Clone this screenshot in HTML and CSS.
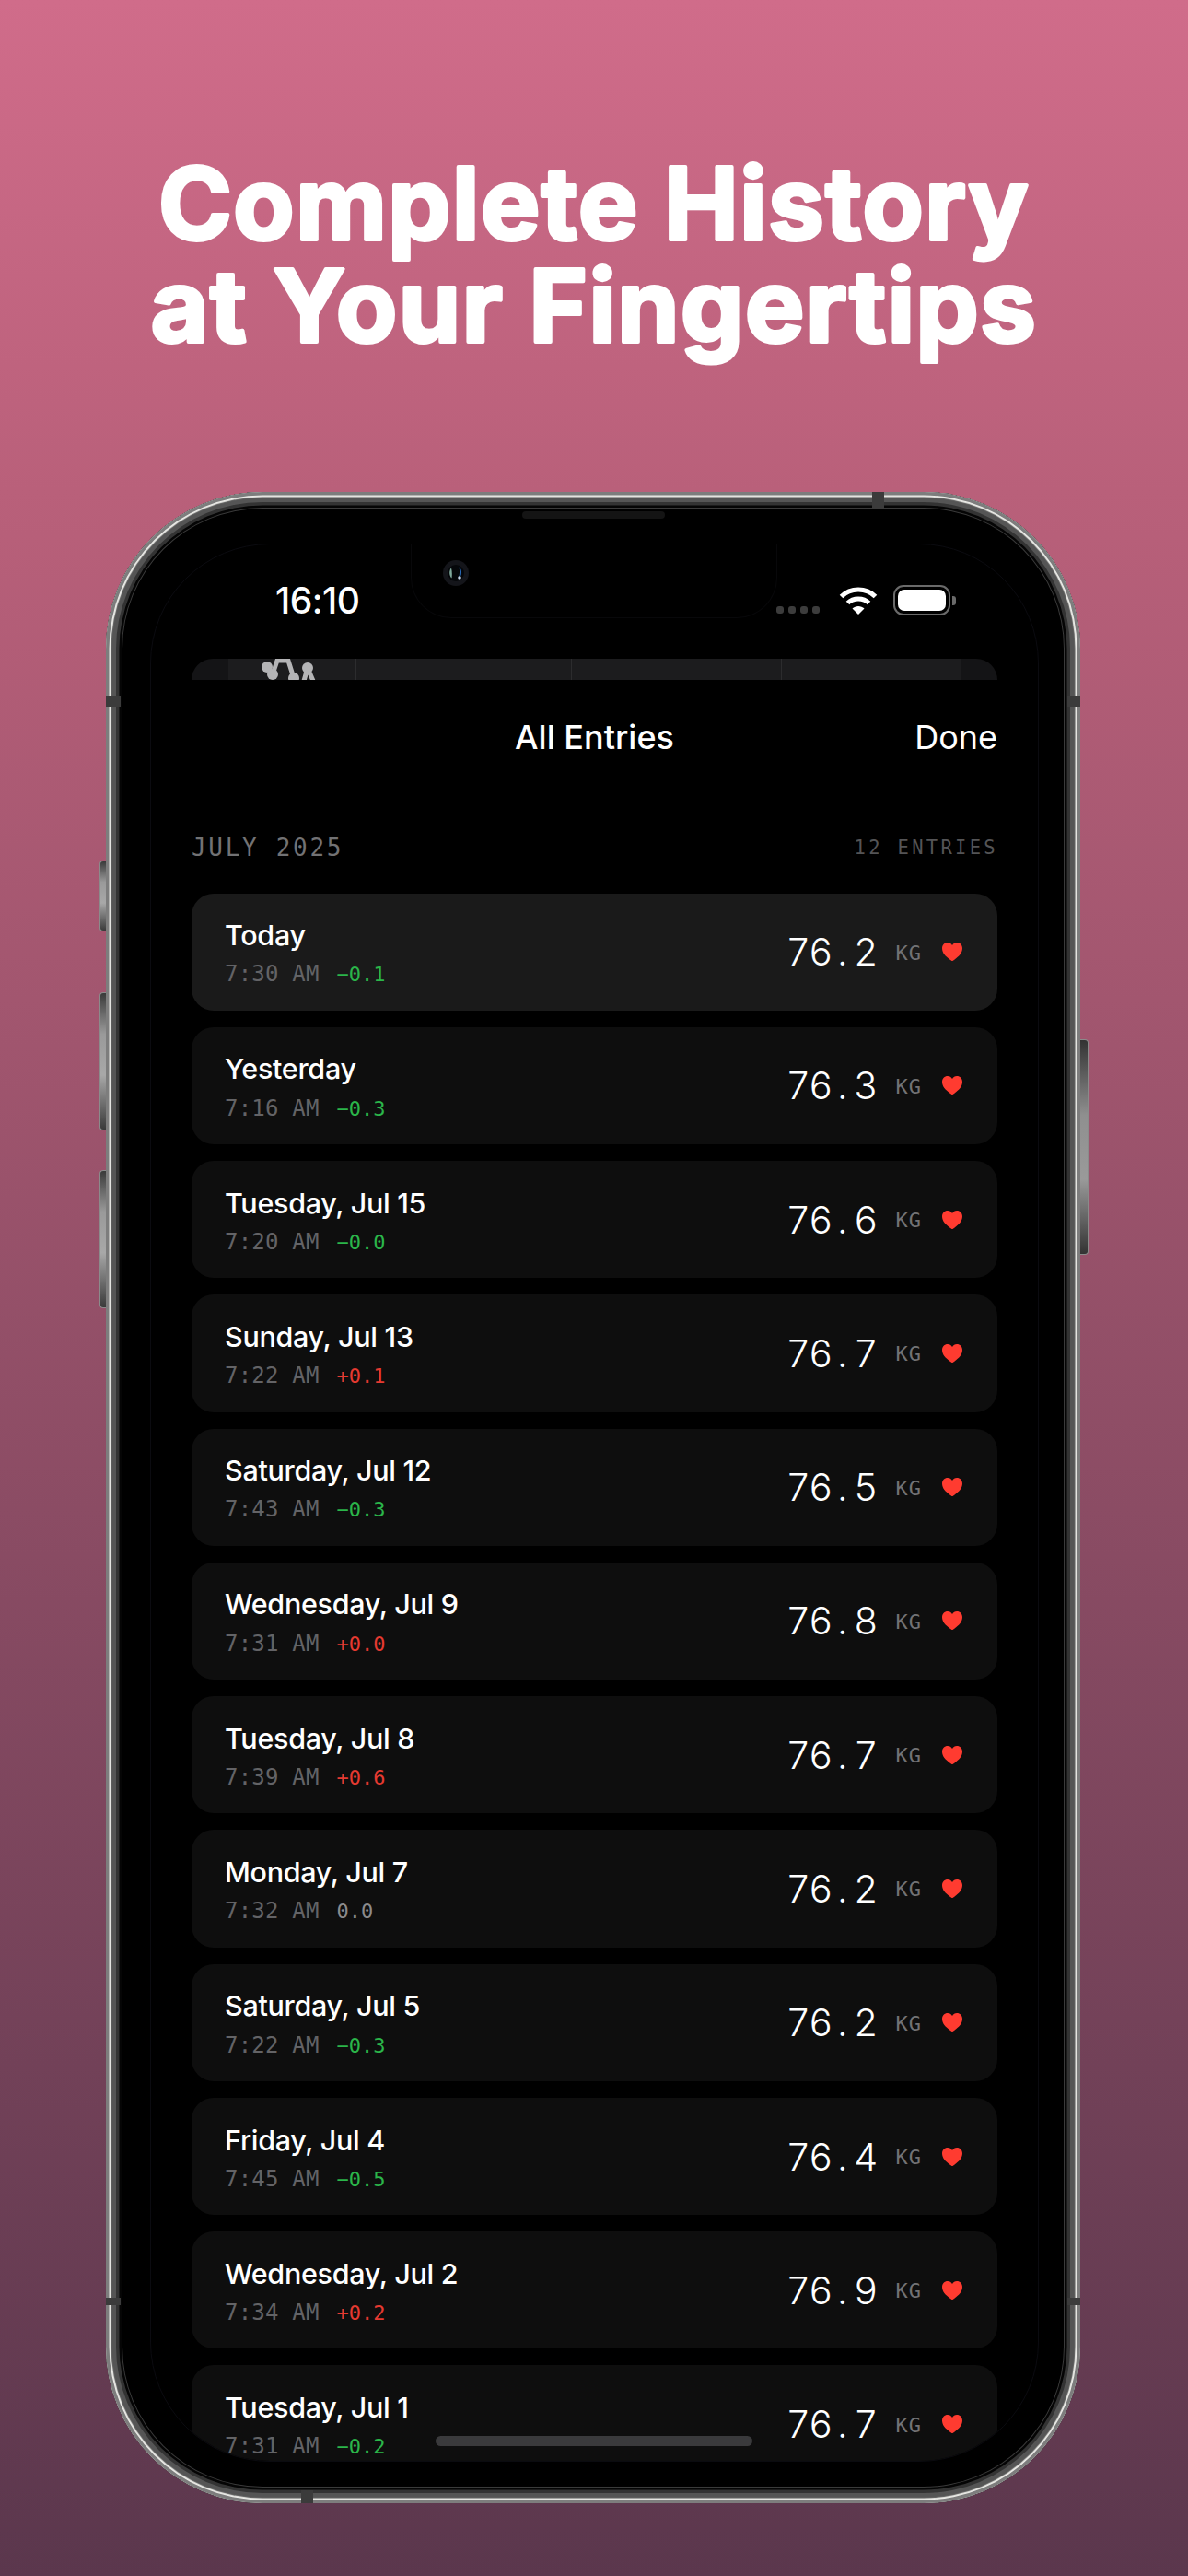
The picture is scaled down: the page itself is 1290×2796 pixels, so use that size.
FILE: index.html
```html
<!DOCTYPE html>
<html lang="en">
<head>
<meta charset="utf-8">
<title>Complete History at Your Fingertips</title>
<link rel="stylesheet" href="styles.css">
</head>
<body>
<svg class="defs" width="0" height="0" aria-hidden="true">
  <symbol id="heart" viewBox="0 0 22 20"><path d="M11 20C10.500 20 9.900 19.600 8.700 18.700C3.600 15 0 11.300 0 6.300C0 2.600 2.600 0 6 0C8.200 0 9.900 1.100 11 2.900C12.100 1.100 13.800 0 16 0C19.400 0 22 2.600 22 6.300C22 11.300 18.400 15 13.300 18.700C12.100 19.600 11.500 20 11 20Z"/></symbol>
</svg>
<main class="poster">
  <h1 class="headline">
    <svg class="headline-art" viewBox="0 0 1290 300">
      <text class="headline-line" x="645" y="120">Complete History</text>
      <text class="headline-line" x="645" y="231">at Your Fingertips</text>
    </svg>
  </h1>
  <div class="phone">
    <span class="btn btn-silent"></span>
    <span class="btn btn-up"></span>
    <span class="btn btn-down"></span>
    <span class="btn btn-power"></span>
    <span class="band band-top"></span>
    <span class="band band-bottom"></span>
    <span class="band band-left"></span>
    <span class="band band-right"></span>
    <span class="band band-left2"></span>
    <span class="band band-right2"></span>
    <span class="speaker"></span>
    <div class="screen">
      <span class="island"></span>
      <svg class="camera" viewBox="0 0 28 28" aria-hidden="true">
        <circle cx="14" cy="14" r="14" fill="#14151a"/>
        <circle cx="14" cy="14" r="9" fill="#05070a"/>
        <path d="M9 8.500C6.500 11 6.500 17 9.500 19.500C10 17 10 12 9 8.500Z" fill="#7fa99c"/>
        <path d="M17.500 7.500C21 10 21 17 17 20C18 16 18.500 11 17.500 7.500Z" fill="#2668b8"/>
        <circle cx="18" cy="19" r="1.800" fill="#c9d6ea"/>
      </svg>
      <div class="status">
        <span class="time">16:10</span>
        <div class="status-icons">
          <span class="signal"><i></i><i></i><i></i><i></i></span>
          <svg class="wifi" viewBox="0 0 42 30" aria-hidden="true">
            <path d="M2.500 10.500C12.500 0.500 29.500 0.500 39.500 10.500" fill="none" stroke="#fff" stroke-width="5"/>
            <path d="M9.500 17.500C15.500 11.500 26.500 11.500 32.500 17.500" fill="none" stroke="#fff" stroke-width="5"/>
            <path d="M21 30L14.500 23.500C18 20 24 20 27.500 23.500Z" fill="#fff"/>
          </svg>
          <span class="battery"><span class="battery-fill"></span></span>
          <span class="battery-nub"></span>
        </div>
      </div>
      <div class="peek">
        <div class="peek-band">
          <div class="peek-cell">
            <svg class="peek-dots" viewBox="0 0 110 23" aria-hidden="true">
              <circle cx="42" cy="9" r="6" fill="#b4b4b6"/>
              <circle cx="48" cy="17" r="6" fill="#b4b4b6"/>
              <circle cx="71" cy="21" r="6" fill="#b4b4b6"/>
              <circle cx="86" cy="10" r="6" fill="#b4b4b6"/>
              <path d="M48 17L53 2H65L71 21M86 10L82 24M86 10L92 24" fill="none" stroke="#b4b4b6" stroke-width="5"/>
            </svg>
          </div>
          <div class="peek-cell"></div>
          <div class="peek-cell"></div>
          <div class="peek-cell"></div>
        </div>
      </div>
      <nav class="nav">
        <span></span>
        <span class="nav-title">All Entries</span>
        <span class="nav-done">Done</span>
      </nav>
      <header class="section">
        <span class="section-month">JULY 2025</span>
        <span class="section-count">12 ENTRIES</span>
      </header>
      <div class="list">
        <article class="row row-current">
          <div class="row-left"><div class="row-date">Today</div><div class="row-sub"><span class="row-time">7:30 AM</span><span class="delta down">−0.1</span></div></div>
          <div class="row-right"><span class="weight"><i>7</i><i>6</i><i>.</i><i>2</i></span><span class="unit">KG</span><svg class="heart"><use href="#heart"/></svg></div>
        </article>
        <article class="row">
          <div class="row-left"><div class="row-date">Yesterday</div><div class="row-sub"><span class="row-time">7:16 AM</span><span class="delta down">−0.3</span></div></div>
          <div class="row-right"><span class="weight"><i>7</i><i>6</i><i>.</i><i>3</i></span><span class="unit">KG</span><svg class="heart"><use href="#heart"/></svg></div>
        </article>
        <article class="row">
          <div class="row-left"><div class="row-date">Tuesday, Jul 15</div><div class="row-sub"><span class="row-time">7:20 AM</span><span class="delta down">−0.0</span></div></div>
          <div class="row-right"><span class="weight"><i>7</i><i>6</i><i>.</i><i>6</i></span><span class="unit">KG</span><svg class="heart"><use href="#heart"/></svg></div>
        </article>
        <article class="row">
          <div class="row-left"><div class="row-date">Sunday, Jul 13</div><div class="row-sub"><span class="row-time">7:22 AM</span><span class="delta up">+0.1</span></div></div>
          <div class="row-right"><span class="weight"><i>7</i><i>6</i><i>.</i><i>7</i></span><span class="unit">KG</span><svg class="heart"><use href="#heart"/></svg></div>
        </article>
        <article class="row">
          <div class="row-left"><div class="row-date">Saturday, Jul 12</div><div class="row-sub"><span class="row-time">7:43 AM</span><span class="delta down">−0.3</span></div></div>
          <div class="row-right"><span class="weight"><i>7</i><i>6</i><i>.</i><i>5</i></span><span class="unit">KG</span><svg class="heart"><use href="#heart"/></svg></div>
        </article>
        <article class="row">
          <div class="row-left"><div class="row-date">Wednesday, Jul 9</div><div class="row-sub"><span class="row-time">7:31 AM</span><span class="delta up">+0.0</span></div></div>
          <div class="row-right"><span class="weight"><i>7</i><i>6</i><i>.</i><i>8</i></span><span class="unit">KG</span><svg class="heart"><use href="#heart"/></svg></div>
        </article>
        <article class="row">
          <div class="row-left"><div class="row-date">Tuesday, Jul 8</div><div class="row-sub"><span class="row-time">7:39 AM</span><span class="delta up">+0.6</span></div></div>
          <div class="row-right"><span class="weight"><i>7</i><i>6</i><i>.</i><i>7</i></span><span class="unit">KG</span><svg class="heart"><use href="#heart"/></svg></div>
        </article>
        <article class="row">
          <div class="row-left"><div class="row-date">Monday, Jul 7</div><div class="row-sub"><span class="row-time">7:32 AM</span><span class="delta flat">0.0</span></div></div>
          <div class="row-right"><span class="weight"><i>7</i><i>6</i><i>.</i><i>2</i></span><span class="unit">KG</span><svg class="heart"><use href="#heart"/></svg></div>
        </article>
        <article class="row">
          <div class="row-left"><div class="row-date">Saturday, Jul 5</div><div class="row-sub"><span class="row-time">7:22 AM</span><span class="delta down">−0.3</span></div></div>
          <div class="row-right"><span class="weight"><i>7</i><i>6</i><i>.</i><i>2</i></span><span class="unit">KG</span><svg class="heart"><use href="#heart"/></svg></div>
        </article>
        <article class="row">
          <div class="row-left"><div class="row-date">Friday, Jul 4</div><div class="row-sub"><span class="row-time">7:45 AM</span><span class="delta down">−0.5</span></div></div>
          <div class="row-right"><span class="weight"><i>7</i><i>6</i><i>.</i><i>4</i></span><span class="unit">KG</span><svg class="heart"><use href="#heart"/></svg></div>
        </article>
        <article class="row">
          <div class="row-left"><div class="row-date">Wednesday, Jul 2</div><div class="row-sub"><span class="row-time">7:34 AM</span><span class="delta up">+0.2</span></div></div>
          <div class="row-right"><span class="weight"><i>7</i><i>6</i><i>.</i><i>9</i></span><span class="unit">KG</span><svg class="heart"><use href="#heart"/></svg></div>
        </article>
        <article class="row">
          <div class="row-left"><div class="row-date">Tuesday, Jul 1</div><div class="row-sub"><span class="row-time">7:31 AM</span><span class="delta down">−0.2</span></div></div>
          <div class="row-right"><span class="weight"><i>7</i><i>6</i><i>.</i><i>7</i></span><span class="unit">KG</span><svg class="heart"><use href="#heart"/></svg></div>
        </article>
      </div>
      <span class="home-indicator"></span>
    </div>
  </div>
</main>
</body>
</html>
```

FILE: styles.css
```css
* { box-sizing: border-box; }
html, body { margin: 0; padding: 0; }
body { width: 1290px; height: 2796px; overflow: hidden; font-family: "Inter", "Liberation Sans", sans-serif; }
.defs { position: absolute; }

.poster {
  width: 1290px;
  height: 2796px;
  padding-top: 140px;
  background: linear-gradient(180deg, #d06c8a 0%, #b9607a 19%, #5b374d 100%);
  display: flex;
  flex-direction: column;
  align-items: center;
}

.headline { flex: none; width: 1290px; height: 300px; margin: 0; font-size: inherit; }
.headline-art { display: block; width: 1290px; height: 300px; }
.headline-line {
  fill: #fff;
  stroke: #fff;
  stroke-width: 4px;
  stroke-linejoin: round;
  font-family: "Inter", "Liberation Sans", sans-serif;
  font-size: 108px;
  font-weight: 700;
  letter-spacing: 1.6px;
  text-anchor: middle;
}

.phone {
  position: relative;
  flex: none;
  width: 1058px;
  height: 2183px;
  margin-top: 94px;
  margin-right: 2px;
  padding: 56px 45px 45px 48px;
  border-radius: 170px;
  background: #000;
  box-shadow:
    inset 0 0 0 3.500px #7d7d7d,
    inset 0 0 1px 5.500px #ecece8,
    inset 0 0 0 11px #555,
    inset 0 0 0 14.500px #333,
    inset 0 0 0 17px #050505,
    inset 0 0 0 18px #3a3a3a;
}

.btn {
  position: absolute;
  background: linear-gradient(180deg, #3a3a3a 0%, #9a9a9a 30%, #a8a8a8 60%, #3a3a3a 100%);
  border: 1px solid #8b8b8b;
  border-right: 0;
  border-radius: 4px 0 0 4px;
  left: -7px;
  width: 7px;
}
.btn-silent { top: 400px; height: 77px; }
.btn-up { top: 543px; height: 150px; }
.btn-down { top: 736px; height: 150px; }
.btn-power {
  left: auto;
  right: -9px;
  top: 594px;
  width: 9px;
  height: 234px;
  border: 1px solid #8b8b8b;
  border-left: 0;
  border-radius: 0 4px 4px 0;
  background: linear-gradient(180deg, #333 0%, #8f8f8f 35%, #9a9a9a 65%, #333 100%);
}

.band { position: absolute; background: #3b3b3b; }
.band-top { top: 0; left: 832px; width: 13px; height: 18px; }
.band-bottom { bottom: 0; left: 212px; width: 13px; height: 14px; }
.band-left { left: 0; top: 221px; width: 16px; height: 12px; }
.band-right { right: 0; top: 221px; width: 14px; height: 12px; }
.band-left2 { left: 0; top: 1960px; width: 16px; height: 8px; }
.band-right2 { right: 0; top: 1960px; width: 14px; height: 8px; }

.speaker {
  position: absolute;
  top: 21px;
  left: 452px;
  width: 155px;
  height: 8px;
  border-radius: 4px;
  background: #141414;
}

.screen {
  position: relative;
  height: 2082px;
  padding: 36.500px 44px 0;
  border: 1px solid #0b0b10;
  border-radius: 130px;
  background: #000;
  overflow: hidden;
}

.island {
  position: absolute;
  top: -1px;
  left: 282px;
  width: 398px;
  height: 81px;
  border: 1px solid #08080a;
  border-top: 0;
  border-radius: 0 0 44px 44px;
}
.camera {
  position: absolute;
  top: 17px;
  left: 317px;
  width: 28px;
  height: 28px;
}

.status {
  position: relative;
  display: flex;
  justify-content: space-between;
  align-items: center;
  height: 48px;
  padding-left: 91px;
  padding-right: 45px;
  color: #fff;
}
.time { font-size: 39px; font-weight: 500; line-height: 48px; letter-spacing: -0.5px; }
.status-icons { display: flex; align-items: center; }
.signal { display: flex; gap: 5px; margin: 20px 21px 0 0; }
.signal i { width: 8px; height: 8px; border-radius: 3px; background: #3c3c3c; }
.wifi { width: 42px; height: 30px; margin-right: 17px; }
.battery {
  display: flex;
  width: 62px;
  height: 33px;
  padding: 3px;
  border: 2.500px solid #6a6a6a;
  border-radius: 11px;
}
.battery-fill { flex: 1; border-radius: 7px; background: #fff; }
.battery-nub {
  width: 4px;
  height: 10px;
  margin-left: 2px;
  border-radius: 0 3px 3px 0;
  background: #6a6a6a;
}

.peek {
  height: 23px;
  margin-top: 39px;
  padding: 0 40px;
  border-radius: 24px 24px 0 0;
  background: #141416;
  overflow: hidden;
}
.peek-band {
  display: grid;
  grid-template-columns: 139px 234px 228px 195px;
  height: 100%;
  background: #1c1c1e;
}
.peek-cell { border-right: 1px solid #2c2c2e; height: 23px; }
.peek-cell:last-child { border-right: 0; }
.peek-dots { display: block; width: 110px; height: 23px; }

.nav {
  display: grid;
  grid-template-columns: 1fr auto 1fr;
  align-items: center;
  height: 44px;
  margin-top: 40px;
  color: #fff;
  font-size: 36px;
  line-height: 44px;
}
.nav-title { font-weight: 500; }
.nav-done { justify-self: end; font-weight: 400; }

.section {
  display: flex;
  justify-content: space-between;
  align-items: center;
  height: 32px;
  margin-top: 82px;
  font-family: "DejaVu Sans Mono", "Liberation Mono", monospace;
}
.section-month { color: #727274; font-size: 26px; letter-spacing: 2.700px; }
.section-count { color: #545456; font-size: 20.500px; letter-spacing: 3.300px; margin-right: -1px; }

.list {
  display: flex;
  flex-direction: column;
  gap: 18px;
  margin-top: 34px;
}

.row {
  flex: none;
  display: flex;
  justify-content: space-between;
  align-items: center;
  height: 127.27px;
  padding: 0 38px 0 36px;
  border-radius: 24px;
  background: #0e0e0e;
}
.row-current { background: #1a1a1a; }
.row-left { padding-top: 3.300px; }
.row-date {
  color: #fff;
  font-size: 30.500px;
  font-weight: 500;
  line-height: 38px;
  letter-spacing: -0.3px;
}
.row-sub {
  display: flex;
  align-items: baseline;
  gap: 19px;
  margin-top: 8.300px;
  font-family: "DejaVu Sans Mono", "Liberation Mono", monospace;
  line-height: 30px;
}
.row-time { color: #636366; font-size: 24px; letter-spacing: 0.2px; }
.delta { font-size: 22px; }
.delta.down { color: #2bb64a; }
.delta.up { color: #e63a31; }
.delta.flat { color: #8a8a8c; }

.row-right { display: flex; align-items: center; }
.weight {
  display: flex;
  color: #fff;
  font-family: "Inter", "Liberation Sans", sans-serif;
  font-size: 41px;
  font-weight: 300;
  line-height: 50px;
  font-variant-numeric: tabular-nums;
}
.weight i { width: 24.500px; font-style: normal; text-align: center; }
.unit {
  margin: 3px 22px 0 21px;
  color: #727274;
  font-family: "DejaVu Sans Mono", "Liberation Mono", monospace;
  font-size: 22px;
  line-height: 28px;
  letter-spacing: 1px;
}
.heart { display: block; width: 22px; height: 20px; fill: #ff3b30; }

.home-indicator {
  position: absolute;
  left: 309px;
  bottom: 16px;
  width: 344px;
  height: 11px;
  border-radius: 6px;
  background: #3a3a3c;
}
```
